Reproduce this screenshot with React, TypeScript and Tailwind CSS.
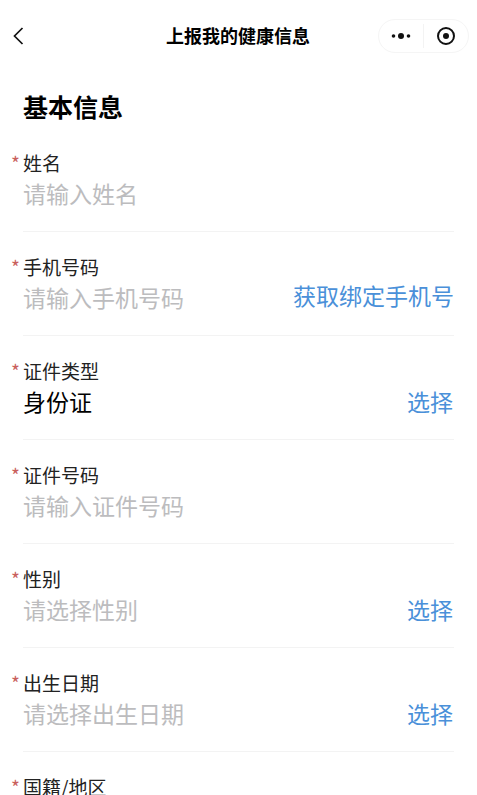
import React from 'react';

const fontStack = "font-['Microsoft_YaHei','Noto_Sans_CJK_SC',sans-serif]";

interface FieldProps {
  label: string;
  value: string;
  filled?: boolean;
  action?: string;
}

const fields: FieldProps[] = [
  { label: '姓名', value: '请输入姓名' },
  { label: '手机号码', value: '请输入手机号码', action: '获取绑定手机号' },
  { label: '证件类型', value: '身份证', filled: true, action: '选择' },
  { label: '证件号码', value: '请输入证件号码' },
  { label: '性别', value: '请选择性别', action: '选择' },
  { label: '出生日期', value: '请选择出生日期', action: '选择' },
];

const Header: React.FC = () => (
  <header className="flex items-center h-[72px] pl-[13px] pr-[8px] shrink-0">
    <div className="w-[85px] shrink-0">
      <svg className="block" width="11" height="18" viewBox="0 0 11 18" fill="none" stroke="#111" strokeWidth="1.7">
        <path d="M9.5 1 L1.5 9 L9.5 17" />
      </svg>
    </div>
    <h1 className="flex-1 text-center text-[18px] leading-[24px] font-bold text-black pb-[3px]">上报我的健康信息</h1>
    <div className="flex items-center w-[91px] h-[34px] rounded-full border border-[#f5f5f5]">
      <div className="w-[44px] flex justify-center">
        <svg width="20" height="8" viewBox="0 0 20 8" fill="#111">
          <circle cx="2.5" cy="4" r="1.8" />
          <circle cx="10" cy="4" r="3" />
          <circle cx="17.5" cy="4" r="1.8" />
        </svg>
      </div>
      <div className="w-px h-[24px] bg-[#f3f3f3]" />
      <div className="flex-1 flex justify-center">
        <svg width="20" height="20" viewBox="0 0 20 20" fill="none" stroke="#111" strokeWidth="2">
          <circle cx="10" cy="10" r="8" />
          <circle cx="10" cy="10" r="3" fill="#111" stroke="none" />
        </svg>
      </div>
    </div>
  </header>
);

const Field: React.FC<FieldProps> = ({ label, value, filled, action }) => (
  <div className="relative h-[104px] pt-[22px]">
    <span className="absolute -left-[12px] top-[22px] text-[19px] leading-[26px] text-[#c9605c]">*</span>
    <div className="text-[19px] leading-[26px] text-[#222]">{label}</div>
    <div className="flex justify-between items-center mt-[1px] text-[23px] leading-[32px]">
      <span className={filled ? 'text-black' : 'text-[#bcbcbe]'}>{value}</span>
      {action && <span className={`text-[#4a90d9] ${action === '选择' ? 'mr-px' : '-translate-y-[2px]'}`}>{action}</span>}
    </div>
    <div className="absolute left-0 right-0 bottom-0 h-px bg-[#f3f3f3]" />
  </div>
);

const App: React.FC = () => (
  <div className={`w-[477px] h-[795px] overflow-hidden bg-white flex flex-col ${fontStack}`}>
    <Header />
    <main className="px-[23px]">
      <h2 className="text-[25px] leading-[34px] font-bold text-black mt-[17px] mb-[5px]">基本信息</h2>
      <div>
        {fields.map(f => (
          <Field key={f.label} {...f} />
        ))}
        <Field label="国籍/地区" value="" />
      </div>
    </main>
  </div>
);

export default App;
